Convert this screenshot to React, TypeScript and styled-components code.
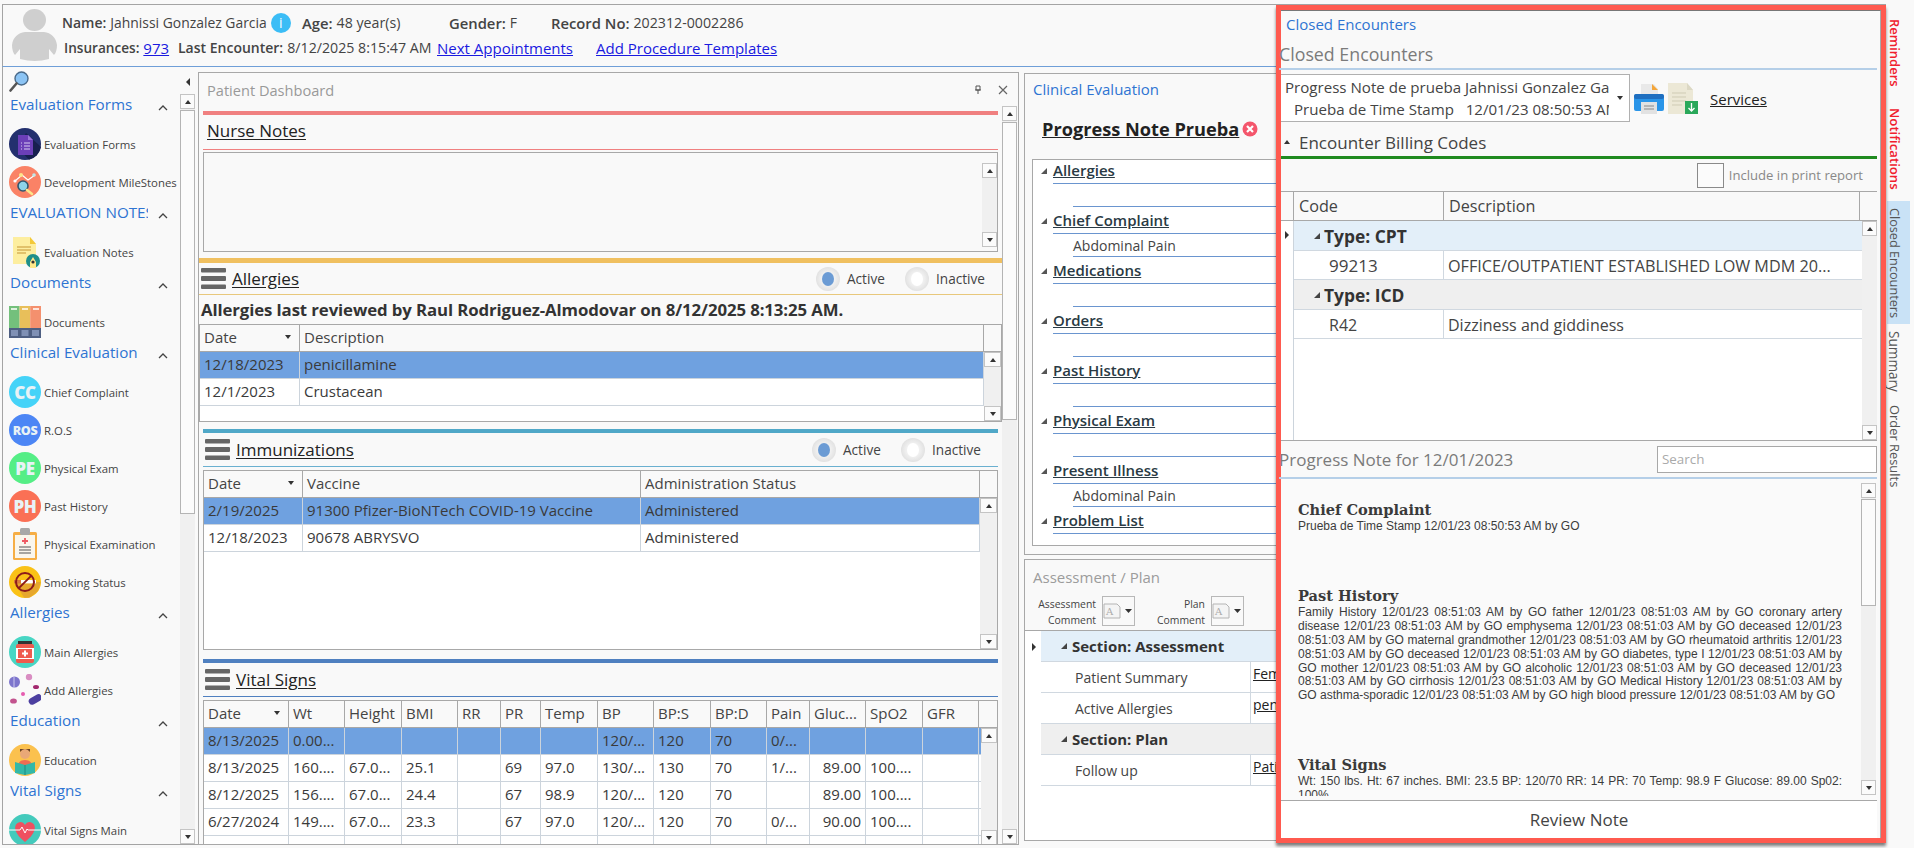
import React from 'react';
import styled, { createGlobalStyle } from 'styled-components';

const Global = createGlobalStyle`
  html, body { margin: 0; padding: 0; background: #f9f9f9; overflow: hidden; }
  * { box-sizing: border-box; }
  body { font-family: "Open Sans", "Noto Sans", sans-serif; color: #3a3a3a; }
`;

const Page = styled.div`width:1914px;height:848px;position:relative;display:flex;overflow:hidden;background:#f9f9f9;`;
const Content = styled.div`width:1886px;padding-top:4px;display:flex;flex-direction:column;`;

/* ---------- header ---------- */
const Header = styled.header`height:63px;margin-left:2px;border-top:1px solid #a4a4a4;border-left:1px solid #a4a4a4;border-bottom:1px solid #6f9fd8;display:flex;padding:5px 0 0 9px;flex:none;`;
const Avatar = styled.svg`width:45px;height:52px;flex:none;margin:-1px 5px 0 0;`;
const HeaderLines = styled.div`display:flex;flex-direction:column;`;
const HeaderLine = styled.div<{ $ml?: number }>`display:flex;align-items:center;height:25px;margin-left:${p => p.$ml ?? 0}px;white-space:nowrap;`;
const Field = styled.div<{ $w?: number }>`display:flex;align-items:center;gap:4px;${p => (p.$w ? `width:${p.$w}px;` : '')}`;
const Label = styled.span<{ $s?: number }>`font-weight:600;color:#444;font-size:${p => p.$s ?? 13.6}px;`;
const Value = styled.span<{ $s: number }>`color:#444;font-size:${p => p.$s}px;`;
const HeaderLink = styled.a`color:#1a1ae0;text-decoration:underline;font-size:15px;`;
const Info = styled.span`width:20px;height:20px;border-radius:50%;background:#3bbdf6;color:#fff;display:inline-flex;align-items:center;justify-content:center;font-size:14px;`;

const Main = styled.div`flex:1;display:flex;min-height:0;`;

/* ---------- scrollbars ---------- */
const ScrollCol = styled.div<{ $w?: number }>`width:${p => p.$w ?? 15}px;flex:none;display:flex;flex-direction:column;background:#f0f0f0;`;
const ScrollBtn = styled.div`height:15px;flex:none;background:#fbfbfb;border:1px solid #c4c4c4;display:flex;align-items:center;justify-content:center;`;
const Thumb = styled.div<{ $h: number }>`height:${p => p.$h}px;flex:none;margin-top:1px;background:#fbfbfb;border:1px solid #b4b4b4;`;
const ScrollGap = styled.div`flex:1;`;
const Tri = styled.i<{ $d: 'u' | 'd' | 'l' | 'r' }>`
  display:block;width:0;height:0;flex:none;border-style:solid;
  ${p => p.$d === 'u' ? 'border-width:0 3.5px 4px;border-color:transparent transparent #333;'
    : p.$d === 'd' ? 'border-width:4px 3.5px 0;border-color:#333 transparent transparent;'
    : p.$d === 'l' ? 'border-width:4px 4px 4px 0;border-color:transparent #333 transparent transparent;'
    : 'border-width:4px 0 4px 4px;border-color:transparent transparent transparent #333;'}
`;
const Scroll = ({ thumb = 0, w }: { thumb?: number; w?: number }) => (
  <ScrollCol $w={w}>
    <ScrollBtn><Tri $d="u" /></ScrollBtn>
    {thumb > 0 && <Thumb $h={thumb} />}
    <ScrollGap />
    <ScrollBtn><Tri $d="d" /></ScrollBtn>
  </ScrollCol>
);

/* ---------- sidebar ---------- */
const Sidebar = styled.aside`width:196px;height:778px;flex:none;margin-left:2px;display:flex;border-left:1px solid #a4a4a4;border-bottom:1px solid #a4a4a4;`;
const Nav = styled.nav`width:177px;flex:none;overflow:hidden;display:flex;flex-direction:column;`;
const SearchRow = styled.div`height:26px;flex:none;padding:4px 0 0 6px;`;
const NavHead = styled.div`height:32px;flex:none;display:flex;padding-left:7px;`;
const NavHeadText = styled.div`width:138px;height:22px;overflow:hidden;white-space:nowrap;color:#2e74d2;font-size:15.2px;line-height:22px;`;
const NavChevron = styled.svg`width:10px;height:6px;margin:12px 0 0 10px;`;
const NavItem = styled.div`height:38px;flex:none;display:flex;align-items:center;padding-left:6px;font-size:11.4px;color:#444;white-space:nowrap;gap:3px;`;
const IconBox = styled.svg`width:32px;height:32px;flex:none;`;
const Badge = styled.span<{ $c: string; $s: number }>`width:32px;height:32px;flex:none;border-radius:50%;background:${p => p.$c};color:#e8f2f6;font-weight:800;font-size:${p => p.$s}px;display:flex;align-items:center;justify-content:center;letter-spacing:-0.3px;`;
const SideRail = styled.div`width:15px;flex:none;display:flex;flex-direction:column;`;
const Collapse = styled.div`height:27px;flex:none;display:flex;justify-content:center;align-items:center;padding-top:2px;`;
const SideTrack = styled.div`flex:1;display:flex;min-height:0;`;

const NoteIcon = () => (
  <IconBox viewBox="0 0 32 32"><path d="M4 1h17l6 7v20H4z" fill="#fdeea0" /><path d="M21 1l6 7h-6z" fill="#f3c93a" /><path d="M8 11h14M8 14h14M8 17h9" stroke="#d8b45a" strokeWidth="1.3" /><circle cx="24" cy="25" r="7" fill="#1f8f8a" /><path d="M21 32v-6l3-5 3 5v6z" fill="#ffe98a" /><circle cx="24" cy="26" r="1.6" fill="#333" /></IconBox>
);
const icons: Record<string, React.ReactNode> = {
  forms: <IconBox viewBox="0 0 32 32"><circle cx="16" cy="16" r="16" fill="#23306e" /><path d="M17 5l15 14a16 16 0 0 1-12 12.7L9 20z" fill="#171f50" /><path d="M9 7h10l5 5v15H9z" fill="#6b3fb8" /><path d="M19 7l5 5h-5z" fill="#9a78d8" /><path d="M15 15h6M15 18h6M15 21h6M12 15h1M12 18h1M12 21h1" stroke="#d9ccf2" strokeWidth="1" /></IconBox>,
  miles: <IconBox viewBox="0 0 32 32"><circle cx="16" cy="16" r="16" fill="#fa8266" /><path d="M6 15l7-6 6 5 7-5" stroke="#fff" strokeWidth="1.2" fill="none" /><circle cx="6" cy="15" r="1.6" fill="#fff" /><circle cx="12" cy="9" r="2" fill="#fde58a" /><circle cx="25" cy="9" r="1.8" fill="#bfe8e8" /><circle cx="14" cy="20" r="5" fill="#8dd3ea" stroke="#33566e" strokeWidth="1.6" /><path d="M18 24l5 4" stroke="#fde58a" strokeWidth="2.6" strokeLinecap="round" /></IconBox>,
  notes: <NoteIcon />,
  docs: <IconBox viewBox="0 0 32 32"><rect width="10.6" height="26" fill="#74c07c" /><rect x="10.6" width="10.6" height="26" fill="#e8bf5a" /><rect x="21.2" width="10.8" height="26" fill="#f4906e" /><rect y="22" width="32" height="10" fill="#4e5f82" /><path d="M2 24h7v6H2zM12.5 24h7v6h-7zM23 24h7v6h-7z" fill="#7f90b4" /><path d="M2 3h6M13 3h6M24 3h6" stroke="#fff" strokeWidth="1.4" /></IconBox>,
  exam: <IconBox viewBox="0 0 32 32"><rect x="4" y="4" width="24" height="28" rx="1.5" fill="#f6ae45" /><rect x="6" y="7" width="20" height="23" fill="#faf6ec" /><rect x="11" y="0" width="10" height="7" rx="1.5" fill="#a8a8a8" /><path d="M16 10v6M13 13h6" stroke="#ee5a62" strokeWidth="1.8" /><path d="M10 19h12M10 22h12M10 25h12" stroke="#555" strokeWidth="1.1" /></IconBox>,
  smoke: <IconBox viewBox="0 0 32 32"><circle cx="16" cy="16" r="16" fill="#fac216" /><path d="M5 16h26.8l-2.8 9-8 6.5a16 16 0 0 1-6 0z" fill="#e6a72e" /><rect x="5" y="14" width="7" height="3.4" fill="#d97a3a" /><rect x="12" y="14" width="15" height="3.4" fill="#fff" /><circle cx="16" cy="16" r="9" fill="none" stroke="#8c1a1a" strokeWidth="2" /><path d="M9.6 22.4L22.4 9.6" stroke="#8c1a1a" strokeWidth="2" /></IconBox>,
  bottle: <IconBox viewBox="0 0 32 32"><circle cx="16" cy="16" r="16" fill="#48d6c4" /><rect x="9" y="5" width="14" height="3" fill="#333" /><rect x="7" y="8" width="18" height="19" rx="2" fill="#ef5a4e" /><rect x="7" y="12" width="18" height="11" fill="#fff" /><rect x="9" y="13" width="14" height="9" fill="#ef5a4e" /><path d="M16 14.5v6M13 17.5h6" stroke="#fff" strokeWidth="2" /></IconBox>,
  pills: <IconBox viewBox="0 0 32 32"><circle cx="5.5" cy="8" r="5.5" fill="#7d75cc" /><path d="M5 2.6v11" stroke="#ccc9ee" /><circle cx="20" cy="3" r="3.2" fill="#d98dc2" /><ellipse cx="27" cy="13" rx="3" ry="2" fill="#a2286e" /><ellipse cx="4.5" cy="27" rx="3.4" ry="2.6" fill="#c2538e" /><circle cx="14" cy="20" r="2" fill="#e65cb0" /><rect x="19" y="22" width="14" height="7" rx="3.5" transform="rotate(-30 26 25)" fill="#4c3fa0" /></IconBox>,
  edu: <IconBox viewBox="0 0 32 32"><circle cx="16" cy="16" r="16" fill="#fbc14e" /><circle cx="16" cy="10" r="5" fill="#e9a877" /><path d="M11 8q5-6 10 0v-3h-10z" fill="#6a4226" /><path d="M8 26c0-8 4-10 8-10s8 2 8 10z" fill="#ef6c53" /><path d="M6 18l10 3 10-3v11l-10 2-10-2z" fill="#33b8a8" /><path d="M16 21v10" stroke="#1f8a80" /></IconBox>,
  vital: <IconBox viewBox="0 0 32 32"><circle cx="16" cy="16" r="16" fill="#44cabc" /><path d="M16 28C6 20 5 14 7 10.5 9.5 7 14 7 16 11c2-4 6.5-4 9-.5 2 3.5 1 9.5-9 17.5z" fill="#ef5060" /><path d="M0 16h11l2-3 3 6 2-4 1 1h13" stroke="#fff" strokeWidth="1" fill="none" /></IconBox>,
};

const navSections = [
  { t: 'Evaluation Forms', items: [['forms', 'Evaluation Forms'], ['miles', 'Development MileStones']] },
  { t: 'EVALUATION NOTES', items: [['notes', 'Evaluation Notes']] },
  { t: 'Documents', items: [['docs', 'Documents']] },
  { t: 'Clinical Evaluation', items: [['cc', 'Chief Complaint'], ['ros', 'R.O.S'], ['pe', 'Physical Exam'], ['ph', 'Past History'], ['exam', 'Physical Examination'], ['smoke', 'Smoking Status']] },
  { t: 'Allergies', items: [['bottle', 'Main Allergies'], ['pills', 'Add Allergies']] },
  { t: 'Education', items: [['edu', 'Education']] },
  { t: 'Vital Signs', items: [['vital', 'Vital Signs Main']] },
];
const badges: Record<string, [string, string, number]> = {
  cc: ['#45d3f8', 'CC', 17], ros: ['#4c86f5', 'ROS', 12.5], pe: ['#55ee86', 'PE', 17], ph: ['#fa7055', 'PH', 17],
};

/* ---------- dashboard ---------- */
const Dash = styled.section`width:821px;flex:none;margin:5px 0 3px 0;border:1px solid #a8a8a8;display:flex;flex-direction:column;`;
const DashHead = styled.div`height:33px;flex:none;display:flex;align-items:center;padding:0 0 0 8px;color:#999;font-size:14.6px;`;
const DashTools = styled.div`margin-left:auto;display:flex;align-items:center;gap:15px;padding-right:10px;`;
const DashRow = styled.div`flex:1;display:flex;min-height:0;`;
const DashBody = styled.div`width:803px;flex:none;padding-top:5px;overflow:hidden;display:flex;flex-direction:column;`;
const Section = styled.div<{ $h: number; $inset?: number }>`height:${p => p.$h}px;flex:none;padding:0 ${p => p.$inset ?? 0}px;overflow:hidden;display:flex;flex-direction:column;`;
const Bar = styled.div<{ $c: string; $h: number }>`height:${p => p.$h}px;flex:none;background:${p => p.$c};`;
const TitleRow = styled.div<{ $c: string; $h: number; $pl?: number; $pb?: number }>`height:${p => p.$h}px;flex:none;border-bottom:1px solid ${p => p.$c};display:flex;align-items:center;gap:6px;padding:0 0 ${p => p.$pb ?? 0}px ${p => p.$pl ?? 2}px;`;
const SecTitle = styled.a`font-size:17px;color:#222;text-decoration:underline;text-underline-offset:2px;`;
const NurseBox = styled.div`height:100px;flex:none;margin-top:2px;border:1px solid #a8a8a8;display:flex;justify-content:flex-end;padding:10px 0 4px;`;
const Burger = styled.svg`width:25px;height:21px;flex:none;`;
const Radios = styled.div`margin-left:auto;display:flex;align-items:center;font-size:13.6px;color:#444;padding-right:20px;`;
const RadioDisc = styled.span<{ $on?: boolean }>`width:24px;height:24px;border-radius:50%;margin:0 7px 0 0;display:flex;align-items:center;justify-content:center;background:radial-gradient(circle,#f0f0f0 40%,#d4d4d4 100%);
  &::after{content:"";width:12px;height:14px;border-radius:50%;background:${p => (p.$on ? '#6b9bd4' : '#fff')};}`;
const RadioText = styled.span<{ $w: number }>`width:${p => p.$w}px;`;
const Reviewed = styled.div`height:29px;flex:none;display:flex;align-items:center;padding-left:2px;font-size:16.8px;font-weight:700;letter-spacing:-0.1px;color:#333;white-space:nowrap;`;

const TableBox = styled.div<{ $h: number; $mt?: number }>`height:${p => p.$h}px;flex:none;margin-top:${p => p.$mt ?? 0}px;border:1px solid #a8a8a8;display:flex;flex-direction:column;background:#fff;overflow:hidden;`;
const GridRow = styled.div<{ $cols: string; $sel?: boolean }>`height:27px;flex:none;display:grid;grid-template-columns:${p => p.$cols};border-bottom:1px solid #ccd4dc;background:${p => (p.$sel ? '#6fa1e0' : '#fff')};font-size:15px;color:#3a3a3a;`;
const HeadRow = styled(GridRow)`background:#f9f9f9;border-bottom:1px solid #a8a8a8;color:#444;`;
const Cell = styled.div<{ $right?: boolean }>`padding:0 4px 2px;display:flex;align-items:center;white-space:nowrap;overflow:hidden;border-right:1px solid #ccd4dc;${p => (p.$right ? 'justify-content:flex-end;' : '')}`;
const HeadCell = styled(Cell)`border-right:1px solid #a8a8a8;justify-content:space-between;padding-right:8px;`;
const PlainCell = styled(Cell)`border-right:none;`;
const TBody = styled.div`flex:1;display:flex;min-height:0;`;
const TRows = styled.div`flex:1;min-width:0;`;

type T = { cols: string; head: string[]; rows: string[][]; h: number; mt?: number; sb: number; rightCol?: number };
const DataTable = ({ cols, head, rows, h, mt, sb, rightCol }: T) => {
  const bodyCols = cols.split(' ').slice(0, -1).join(' ');
  return (
    <TableBox $h={h} $mt={mt}>
      <HeadRow $cols={cols}>
        {head.map((c, i) => <HeadCell key={i}>{c}{i === 0 && <Tri $d="d" />}</HeadCell>)}
        <PlainCell />
      </HeadRow>
      <TBody>
        <TRows>
          {rows.map((r, i) => (
            <GridRow key={i} $cols={bodyCols} $sel={i === 0}>
              {r.map((c, j) => <Cell key={j} $right={j === rightCol}>{c}</Cell>)}
            </GridRow>
          ))}
        </TRows>
        <Scroll w={sb} />
      </TBody>
    </TableBox>
  );
};

const BurgerIcon = () => (
  <Burger viewBox="0 0 25 21"><rect width="25" height="4.5" rx="1" fill="#666" /><rect y="8" width="25" height="5" rx="1" fill="#666" /><rect y="16.5" width="25" height="4.5" rx="1" fill="#666" /></Burger>
);
const RadioPair = () => (
  <Radios>
    <RadioDisc $on /><RadioText $w={58}>Active</RadioText>
    <RadioDisc /><RadioText $w={46}>Inactive</RadioText>
  </Radios>
);

const vitalRows = [
  ['8/13/2025', '0.00...', '', '', '', '', '', '120/...', '120', '70', '0/...', '', '', ''],
  ['8/13/2025', '160....', '67.0...', '25.1', '', '69', '97.0', '130/...', '130', '70', '1/...', '89.00', '100....', ''],
  ['8/12/2025', '156....', '67.0...', '24.4', '', '67', '98.9', '120/...', '120', '70', '', '89.00', '100....', ''],
  ['6/27/2024', '149....', '67.0...', '23.3', '', '67', '97.0', '120/...', '120', '70', '0/...', '90.00', '100....', ''],
  ['', '', '', '', '', '', '', '', '', '', '', '', '', ''],
];

/* ---------- clinical column ---------- */
const Clinical = styled.div`flex:1;min-width:0;margin:6px 0 0 5px;display:flex;flex-direction:column;gap:4px;`;
const CPanel = styled.section<{ $h: number }>`height:${p => p.$h}px;flex:none;border:1px solid #a8a8a8;display:flex;flex-direction:column;overflow:hidden;`;
const CTitle = styled.div`height:29px;flex:none;display:flex;align-items:center;padding-left:8px;font-size:15px;color:#2e74d2;`;
const NoteTitle = styled.div`height:56px;flex:none;display:flex;align-items:center;padding:0 0 4px 17px;gap:3px;`;
const NoteName = styled.a`font-size:18.2px;font-weight:700;color:#222;text-decoration:underline;white-space:nowrap;`;
const TreeBox = styled.div`height:387px;flex:none;margin-left:7px;border:1px solid #a8a8a8;background:#fff;overflow:hidden;`;
const TreeHead = styled.div`height:27px;flex:none;margin:0 0 0 20px;border-bottom:1px solid #6a95cf;display:flex;align-items:center;position:relative;&:first-child{margin-top:-3px;}`;
const TreeName = styled.a`font-size:15px;font-weight:600;color:#2a3a44;text-decoration:underline;`;
const TreeArrow = styled.svg`position:absolute;left:-12px;top:11px;width:6px;height:6px;`;
const TreeChild = styled.div`height:23px;margin-left:40px;border-bottom:1px solid #6a95cf;font-size:14px;color:#444;display:flex;align-items:center;`;

const APTitle = styled(CTitle)`color:#9c9c9c;height:34px;`;
const APToolbar = styled.div`height:37px;flex:none;display:flex;padding-top:2px;`;
const CommentGroup = styled.div<{ $w: number }>`width:${p => p.$w}px;display:flex;justify-content:flex-end;gap:6px;`;
const CommentLabel = styled.div`font-size:10.4px;line-height:16px;text-align:right;color:#444;`;
const CommentBtn = styled.div`width:33px;height:30px;border:1px solid #b8b8b8;display:flex;align-items:center;gap:2px;`;
const APGrid = styled.div`flex:1;display:flex;background:#fff;border-top:1px solid #a8a8a8;margin-top:-1px;font-size:14px;color:#444;`;
const Gutter = styled.div`width:16px;flex:none;padding-top:12px;padding-left:7px;`;
const APRows = styled.div`flex:1;`;
const GroupRow = styled.div<{ $c: string }>`height:31px;background:${p => p.$c};display:flex;align-items:center;padding-left:20px;gap:5px;font-weight:700;font-size:15px;color:#333;border-bottom:1px solid #d0d8e0;`;
const APRow = styled.div`height:31px;display:flex;border-bottom:1px solid #d0d8e0;`;
const APName = styled.div`width:210px;flex:none;padding-left:34px;display:flex;align-items:center;border-right:1px solid #d0d8e0;`;
const APVal = styled.a`padding:2px 0 0 2px;font-size:14px;color:#222;text-decoration:underline;`;
const SmallArrow = styled.svg`width:6px;height:6px;flex:none;`;

/* ---------- overlay ---------- */
const Overlay = styled.div`position:absolute;left:1276px;top:5px;width:610px;height:838px;border:5px solid #ff5a4f;box-shadow:0 3px 3px rgba(0,0,0,.5);background:#f9f9f9;z-index:5;`;
const OvBody = styled.div`height:100%;border-top:1px solid #777;border-right:1px solid #a8a8a8;padding-right:3px;display:flex;flex-direction:column;`;
const OvLink = styled.div`height:30px;flex:none;display:flex;align-items:center;padding:0 0 4px 5px;color:#2e74d2;font-size:15px;`;
const OvTitle = styled.div`height:29px;flex:none;border-bottom:2px solid #b5cfe8;display:flex;align-items:center;font-size:17.8px;color:#7b7b7b;margin-left:-2px;padding-bottom:2px;overflow:hidden;`;
const SelectRow = styled.div`height:58px;flex:none;display:flex;align-items:flex-start;padding-top:4px;`;
const Combo = styled.div`width:349px;height:48px;flex:none;background:#fff;border:1px solid #b0b0b0;border-left:none;display:flex;align-items:center;gap:8px;font-size:15.1px;color:#444;`;
const ComboText = styled.div`width:328px;flex:none;padding-left:4px;overflow:hidden;white-space:pre;line-height:22px;`;
const ComboLine2 = styled.div`padding-left:9px;`;
const SelectIcons = styled.div`display:flex;align-items:center;margin:9px 0 0 4px;gap:4px;`;
const Services = styled.a`font-size:15px;color:#222;text-decoration:underline;margin:15px 0 0 12px;`;
const BillHead = styled.div`height:31px;flex:none;border-bottom:3px solid #1f8a1f;display:flex;align-items:center;gap:9px;padding-left:3px;font-size:17px;color:#444;`;
const CheckRow = styled.div`height:32px;flex:none;display:flex;align-items:center;justify-content:flex-end;gap:5px;padding-right:14px;font-size:13.1px;color:#888;`;
const CheckBoxEl = styled.span`width:27px;height:25px;background:#fbfbfb;border:1px solid #8a8a8a;`;
const OvTable = styled.div`height:250px;flex:none;display:flex;flex-direction:column;border-top:1px solid #a8a8a8;border-bottom:1px solid #a8a8a8;background:#fff;`;
const OvHead = styled.div`height:29px;flex:none;display:grid;grid-template-columns:13px 150px 416px 1fr;background:#f9f9f9;border-bottom:1px solid #a8a8a8;font-size:16.2px;color:#444;`;
const OvHeadCell = styled.div`border-right:1px solid #a8a8a8;display:flex;align-items:center;padding-left:5px;`;
const OvBodyRow = styled.div`flex:1;display:flex;min-height:0;`;
const OvGutter = styled.div`width:13px;flex:none;border-right:1px solid #ccd4dc;padding:10px 0 0 4px;`;
const OvRows = styled.div`flex:1;min-width:0;`;
const OvGroup = styled.div<{ $c: string }>`height:30px;background:${p => p.$c};border-bottom:1px solid #d0d8e0;display:flex;align-items:center;gap:4px;padding-left:20px;font-size:17.4px;font-weight:700;color:#333;`;
const OvRow = styled.div`height:29px;display:grid;grid-template-columns:150px 1fr;border-bottom:1px solid #d0d8e0;color:#444;`;
const OvCell = styled.div<{ $pl: number; $s: number }>`padding:1px 0 0 ${p => p.$pl}px;font-size:${p => p.$s}px;display:flex;align-items:center;white-space:nowrap;overflow:hidden;&:first-child{border-right:1px solid #d0d8e0;}`;
const NoteHead = styled.div`height:38px;flex:none;border-bottom:2px solid #b5cfe8;display:flex;align-items:center;font-size:17px;color:#7b7b7b;margin-left:-2px;justify-content:space-between;`;
const SearchBox = styled.div`width:220px;height:27px;background:#fff;border:1px solid #a8a8a8;padding-left:4px;font-size:13.4px;color:#aaa;display:flex;align-items:center;`;
const NoteArea = styled.div`height:321px;flex:none;display:flex;background:#fafafa;overflow:hidden;`;
const NoteText = styled.div`flex:1;min-width:0;padding:21px 19px 0 17px;overflow:hidden;height:317px;`;
const NoteBlock = styled.div`margin-bottom:52px;`;
const NoteH = styled.div`font-family:"DejaVu Serif",serif;font-weight:700;font-size:14.6px;line-height:20px;color:#3a3a3a;`;
const NoteP = styled.div`font-family:"Liberation Sans",Arial,sans-serif;font-size:12px;line-height:13.9px;color:#3c3c3c;text-align:justify;`;
const NoteScroll = styled.div`padding:4px 1px 5px 0;flex:none;display:flex;`;
const Review = styled.div`flex:1;background:#fff;border-top:1px solid #a8a8a8;display:flex;align-items:center;justify-content:center;font-size:17px;color:#444;`;

/* ---------- right rail ---------- */
const Rail = styled.div`width:28px;flex:none;padding:19px 0 0 1px;display:flex;flex-direction:column;align-items:flex-start;`;
const RailTab = styled.div<{ $mt?: number; $s: number; $red?: boolean; $on?: boolean }>`writing-mode:vertical-rl;width:23px;margin-top:${p => p.$mt ?? 0}px;font-size:${p => p.$s}px;font-weight:${p => (p.$red ? 600 : 400)};color:${p => (p.$red ? '#f0202e' : '#555')};background:${p => (p.$on ? '#c9e2f6' : 'transparent')};padding:${p => (p.$on ? '7px 8px 6px 0' : '0 8px 0 0')};line-height:15px;white-space:nowrap;`;

const SmallTree = () => <SmallArrow viewBox="0 0 6 6"><path d="M6 0v6H0z" fill="#444" /></SmallArrow>;
const CommentIcon = () => (
  <svg width="30" height="16" viewBox="0 0 30 16"><path d="M1 1h13l3 3v11H1z" fill="#f4f4f4" stroke="#b4b4b4" /><text x="3" y="12" fontFamily="'DejaVu Serif',serif" fontSize="10" fill="#aaa">A</text><path d="M22 6h7l-3.5 4z" fill="#333" /></svg>
);

const treeItems: [string, string][] = [
  ['Allergies', ''], ['Chief Complaint', 'Abdominal Pain'], ['Medications', ''], ['Orders', ''], ['Past History', ''], ['Physical Exam', ''], ['Present Illness', 'Abdominal Pain'], ['Problem List', ''],
];

export default function App() {
  return (
    <Page>
      <Global />
      <Content>
        <Header>
          <Avatar viewBox="0 0 45 52">
            <ellipse cx="22.5" cy="11" rx="11.5" ry="11" fill="#cfcfcf" />
            <path d="M13 23h19c7 1 12 5 13 13 0 4-1 8-3 10l-5-6v10q-14 4-29 0V40l-5 6C1 44 0 40 0 36c1-8 6-12 13-13z" fill="#cfcfcf" />
          </Avatar>
          <HeaderLines>
            <HeaderLine>
              <Field $w={240}><Label $s={14}>Name:</Label><Value $s={13.9}>Jahnissi Gonzalez Garcia</Value><Info>i</Info></Field>
              <Field $w={147}><Label $s={14.8}>Age:</Label><Value $s={14.2}>48 year(s)</Value></Field>
              <Field $w={102}><Label $s={14.8}>Gender:</Label><Value $s={14}>F</Value></Field>
              <Field><Label $s={14.8}>Record No:</Label><Value $s={14.2}>202312-0002286</Value></Field>
            </HeaderLine>
            <HeaderLine $ml={2}>
              <Field $w={114}><Label>Insurances:</Label><HeaderLink>973</HeaderLink></Field>
              <Field $w={259}><Label $s={14}>Last Encounter:</Label><Value $s={14.2}>8/12/2025 8:15:47 AM</Value></Field>
              <Field $w={159}><HeaderLink>Next Appointments</HeaderLink></Field>
              <Field><HeaderLink>Add Procedure Templates</HeaderLink></Field>
            </HeaderLine>
          </HeaderLines>
        </Header>
        <Main>
          <Sidebar>
            <Nav>
              <SearchRow>
                <svg width="20" height="21" viewBox="0 0 20 21"><circle cx="12.5" cy="7.5" r="6.5" fill="#8cc4f4" stroke="#4a6a8a" strokeWidth="1.4" /><path d="M7.5 12.5L1.5 19.5" stroke="#555" strokeWidth="2.6" strokeLinecap="round" /></svg>
              </SearchRow>
              {navSections.map(s => (
                <React.Fragment key={s.t}>
                  <NavHead>
                    <NavHeadText>{s.t}</NavHeadText>
                    <NavChevron viewBox="0 0 10 6"><path d="M1 5l4-4 4 4" fill="none" stroke="#444" strokeWidth="1.3" /></NavChevron>
                  </NavHead>
                  {s.items.map(([k, label]) => (
                    <NavItem key={label}>
                      {badges[k] ? <Badge $c={badges[k][0]} $s={badges[k][2]}>{badges[k][1]}</Badge> : icons[k]}
                      {label}
                    </NavItem>
                  ))}
                </React.Fragment>
              ))}
            </Nav>
            <SideRail>
              <Collapse><Tri $d="l" /></Collapse>
              <SideTrack><Scroll thumb={404} /></SideTrack>
            </SideRail>
          </Sidebar>

          <Dash>
            <DashHead>
              Patient Dashboard
              <DashTools>
                <svg width="10" height="10" viewBox="0 0 10 10"><path d="M3 1h4v4H3zM2 5h6M5 5v4" fill="none" stroke="#555" /></svg>
                <svg width="10" height="10" viewBox="0 0 10 10"><path d="M1 1l8 8M9 1l-8 8" stroke="#666" strokeWidth="1.2" /></svg>
              </DashTools>
            </DashHead>
            <DashRow>
              <DashBody>
                <Section $h={147} $inset={4}>
                  <Bar $c="#f08080" $h={4} />
                  <TitleRow $c="#f08080" $h={35} $pl={4} $pb={3}><SecTitle>Nurse Notes</SecTitle></TitleRow>
                  <NurseBox><Scroll /></NurseBox>
                </Section>
                <Section $h={171}>
                  <Bar $c="#f0c060" $h={5} />
                  <TitleRow $c="#e8c87c" $h={32}><BurgerIcon /><SecTitle>Allergies</SecTitle><RadioPair /></TitleRow>
                  <Reviewed>Allergies last reviewed by Raul Rodriguez-Almodovar on 8/12/2025 8:13:25 AM.</Reviewed>
                  <DataTable cols="100px 684px 17px" head={['Date', 'Description']} rows={[['12/18/2023', 'penicillamine'], ['12/1/2023', 'Crustacean']]} h={98} sb={17} />
                </Section>
                <Section $h={230} $inset={4}>
                  <Bar $c="#50a8c8" $h={4} />
                  <TitleRow $c="#6ab0d0" $h={34}><BurgerIcon /><SecTitle>Immunizations</SecTitle><RadioPair /></TitleRow>
                  <DataTable cols="99px 338px 339px 17px" head={['Date', 'Vaccine', 'Administration Status']} rows={[['2/19/2025', '91300 Pfizer-BioNTech COVID-19 Vaccine', 'Administered'], ['12/18/2023', '90678 ABRYSVO', 'Administered']]} h={180} mt={3} sb={17} />
                </Section>
                <Section $h={190} $inset={4}>
                  <Bar $c="#4f80c0" $h={4} />
                  <TitleRow $c="#4f80c0" $h={34}><BurgerIcon /><SecTitle>Vital Signs</SecTitle></TitleRow>
                  <DataTable cols="85px 56px 57px 56px 43px 40px 57px 56px 57px 56px 43px 56px 57px 56px 16px" head={['Date', 'Wt', 'Height', 'BMI', 'RR', 'PR', 'Temp', 'BP', 'BP:S', 'BP:D', 'Pain', 'Gluc...', 'SpO2', 'GFR']} rows={vitalRows} h={146} mt={3} sb={16} rightCol={11} />
                </Section>
              </DashBody>
              <Scroll thumb={298} />
            </DashRow>
          </Dash>

          <Clinical>
            <CPanel $h={482}>
              <CTitle>Clinical Evaluation</CTitle>
              <NoteTitle>
                <NoteName>Progress Note Prueba</NoteName>
                <svg width="16" height="16" viewBox="0 0 16 16"><circle cx="8" cy="8" r="7.5" fill="#f4566c" /><path d="M5 5l6 6M11 5l-6 6" stroke="#fff" strokeWidth="2.2" /></svg>
              </NoteTitle>
              <TreeBox>
                {treeItems.map(([n, c]) => (
                  <React.Fragment key={n}>
                    <TreeHead>
                      <TreeArrow viewBox="0 0 6 6"><path d="M6 0v6H0z" fill="#555" /></TreeArrow>
                      <TreeName>{n}</TreeName>
                    </TreeHead>
                    <TreeChild>{c}</TreeChild>
                  </React.Fragment>
                ))}
              </TreeBox>
            </CPanel>
            <CPanel $h={282}>
              <APTitle>Assessment / Plan</APTitle>
              <APToolbar>
                <CommentGroup $w={110}><CommentLabel>Assessment<br />Comment</CommentLabel><CommentBtn><CommentIcon /></CommentBtn></CommentGroup>
                <CommentGroup $w={109}><CommentLabel>Plan<br />Comment</CommentLabel><CommentBtn><CommentIcon /></CommentBtn></CommentGroup>
              </APToolbar>
              <APGrid>
                <Gutter><Tri $d="r" /></Gutter>
                <APRows>
                  <GroupRow $c="#e3eff9"><SmallTree />Section: Assessment</GroupRow>
                  <APRow><APName>Patient Summary</APName><APVal>Female</APVal></APRow>
                  <APRow><APName>Active Allergies</APName><APVal>penicillamine</APVal></APRow>
                  <GroupRow $c="#efefef"><SmallTree />Section: Plan</GroupRow>
                  <APRow><APName>Follow up</APName><APVal>Patient</APVal></APRow>
                </APRows>
              </APGrid>
            </CPanel>
          </Clinical>
        </Main>
      </Content>

      <Overlay>
        <OvBody>
          <OvLink>Closed Encounters</OvLink>
          <OvTitle>Closed Encounters</OvTitle>
          <SelectRow>
            <Combo>
              <ComboText>
                Progress Note de prueba Jahnissi Gonzalez Garcia
                <ComboLine2>{'Prueba de Time Stamp   12/01/23 08:50:53 AM'}</ComboLine2>
              </ComboText>
              <Tri $d="d" />
            </Combo>
            <SelectIcons>
              <svg width="30" height="30" viewBox="0 0 30 30"><path d="M7 0h13l4 5v7H7z" fill="#e9e9e9" /><path d="M18 0l6 6h-6z" fill="#f4a63a" /><path d="M0 13q0-3 3-3h24q3 0 3 3v12q0 2-2 2H2q-2 0-2-2z" fill="#2a95e8" /><rect y="10" width="30" height="5" rx="2" fill="#1f6fc0" /><rect x="7" y="18" width="16" height="12" fill="#e2e2e2" /><path d="M10 22h10M10 25h10" stroke="#888" /></svg>
              <svg width="30" height="31" viewBox="0 0 30 31"><path d="M0 0h19l6 7v24H0z" fill="#ece8d6" /><path d="M19 0l6 7h-6z" fill="#dcd8c4" /><path d="M4 10h14M4 14h14M4 18h14M4 22h10" stroke="#cfcbb4" /><rect x="17" y="18" width="13" height="13" fill="#2aa85a" /><path d="M23.5 20v8M20.5 25l3 3 3-3" fill="none" stroke="#fff" strokeWidth="1.3" /></svg>
            </SelectIcons>
            <Services>Services</Services>
          </SelectRow>
          <BillHead><Tri $d="u" />Encounter Billing Codes</BillHead>
          <CheckRow><CheckBoxEl />Include in print report</CheckRow>
          <OvTable>
            <OvHead><OvHeadCell /><OvHeadCell>Code</OvHeadCell><OvHeadCell>Description</OvHeadCell><div /></OvHead>
            <OvBodyRow>
              <OvGutter><Tri $d="r" /></OvGutter>
              <OvRows>
                <OvGroup $c="#e3eff9"><SmallTree />Type: CPT</OvGroup>
                <OvRow><OvCell $pl={35} $s={17}>99213</OvCell><OvCell $pl={4} $s={16.2}>OFFICE/OUTPATIENT ESTABLISHED LOW MDM 20...</OvCell></OvRow>
                <OvGroup $c="#efefef"><SmallTree />Type: ICD</OvGroup>
                <OvRow><OvCell $pl={35} $s={16}>R42</OvCell><OvCell $pl={4} $s={16}>Dizziness and giddiness</OvCell></OvRow>
              </OvRows>
              <Scroll />
            </OvBodyRow>
          </OvTable>
          <NoteHead>Progress Note for 12/01/2023<SearchBox>Search</SearchBox></NoteHead>
          <NoteArea>
            <NoteText>
              <NoteBlock><NoteH>Chief Complaint</NoteH><NoteP>Prueba de Time Stamp 12/01/23 08:50:53 AM by GO</NoteP></NoteBlock>
              <NoteBlock><NoteH>Past History</NoteH><NoteP>Family History 12/01/23 08:51:03 AM by GO father 12/01/23 08:51:03 AM by GO coronary artery disease 12/01/23 08:51:03 AM by GO emphysema 12/01/23 08:51:03 AM by GO deceased 12/01/23 08:51:03 AM by GO maternal grandmother 12/01/23 08:51:03 AM by GO rheumatoid arthritis 12/01/23 08:51:03 AM by GO deceased 12/01/23 08:51:03 AM by GO diabetes, type I 12/01/23 08:51:03 AM by GO mother 12/01/23 08:51:03 AM by GO alcoholic 12/01/23 08:51:03 AM by GO deceased 12/01/23 08:51:03 AM by GO cirrhosis 12/01/23 08:51:03 AM by GO Medical History 12/01/23 08:51:03 AM by GO asthma-sporadic 12/01/23 08:51:03 AM by GO high blood pressure 12/01/23 08:51:03 AM by GO</NoteP></NoteBlock>
              <NoteBlock><NoteH>Vital Signs</NoteH><NoteP>Wt: 150 lbs. Ht: 67 inches. BMI: 23.5 BP: 120/70 RR: 14 PR: 70 Temp: 98.9 F Glucose: 89.00 Sp02: 100%</NoteP></NoteBlock>
            </NoteText>
            <NoteScroll><Scroll thumb={107} /></NoteScroll>
          </NoteArea>
          <Review>Review Note</Review>
        </OvBody>
      </Overlay>

      <Rail>
        <RailTab $red $s={13}>Reminders</RailTab>
        <RailTab $red $s={13.2} $mt={21}>Notifications</RailTab>
        <RailTab $on $s={12.7} $mt={12}>Closed Encounters</RailTab>
        <RailTab $s={13.6} $mt={7}>Summary</RailTab>
        <RailTab $s={12.9} $mt={13}>Order Results</RailTab>
      </Rail>
    </Page>
  );
}
